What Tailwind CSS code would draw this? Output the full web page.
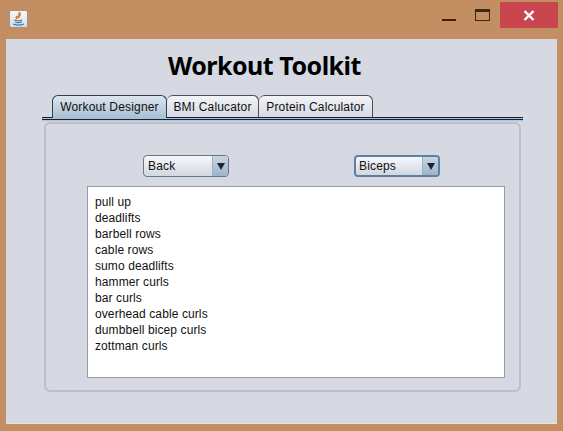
<!DOCTYPE html>
<html>
<head>
<meta charset="utf-8">
<script src="https://cdn.jsdelivr.net/npm/@tailwindcss/browser@4"></script>
</head>
<body class="m-0 overflow-hidden">
<div class="w-[563px] h-[431px] bg-[#c38f62] flex flex-col font-['Liberation_Sans',Arial,sans-serif] overflow-hidden">
  <!-- title bar -->
  <div class="h-[39px] shrink-0 flex items-start relative">
    <div class="ml-[9px] mt-[10px] w-[19px] h-[18px] rounded-[2px] bg-gradient-to-b from-[#f8f8f8] to-[#d8dde3] border border-[#9a9590] flex items-center justify-center">
      <svg width="13" height="14" viewBox="0 0 13 14">
        <path d="M7 1c1 2-2 3-1 5 1-1 3-2 2-5zM5 4c-1 1-1 2 0 3" fill="none" stroke="#d9793a" stroke-width="1.3"/>
        <path d="M2 8c2 1 7 1 8 0M3 10c2 .8 5 .8 7 0M1 12c3 1.300 8 1.300 11 0" fill="none" stroke="#3d7ca8" stroke-width="1.200"/>
      </svg>
    </div>
    <div class="ml-auto flex items-start">
      <div class="w-[14px] h-[2px] bg-[#3a2208] mt-[19px] mr-[19px]"></div>
      <div class="w-[15px] h-[12px] mt-[9px] mr-[10px] border border-[#3a2a14] border-t-[3px]"></div>
      <div class="w-[58px] h-[26px] mt-[2px] mr-[5px] bg-[#c9464f] flex items-center justify-center">
        <svg width="12" height="11" viewBox="0 0 12 11"><path d="M1.500 1 10.500 10M10.500 1 1.500 10" stroke="#fff" stroke-width="2.400"/></svg>
      </div>
    </div>
  </div>
  <!-- client -->
  <div class="ml-[6px] w-[551px] h-[385px] shrink-0 bg-[#d6d9e1] border-b border-[#e8e4dc] flex flex-col">
    <div class="mt-[9px] h-[34px] pl-[162px] text-[25px] leading-[34px] font-bold text-black font-['Noto_Sans',sans-serif] tracking-[-0.5px] whitespace-nowrap">Workout Toolkit</div>
    <!-- tabs -->
    <div class="mt-[12px] ml-[36px] w-[481px] h-[24px] flex items-end pl-[10px] border-b border-[#0f2440] text-[12px] leading-[22px] text-[#111] tracking-[0.17px]">
      <div class="h-[23px] -mb-[1px] w-[115px] text-center rounded-t-[6px] border border-b-0 border-[#2d3f55] bg-gradient-to-b from-[#dde5ed] to-[#a9bfd3] z-10">Workout Designer</div>
      <div class="h-[22px] w-[92px] text-center rounded-t-[6px] border border-l-0 border-b-0 border-[#4a4f58] bg-gradient-to-b from-[#f3f4f7] to-[#d5d9e2]">BMI Calucator</div>
      <div class="h-[22px] w-[114px] text-center rounded-t-[6px] border border-l-0 border-b-0 border-[#4a4f58] bg-gradient-to-b from-[#f3f4f7] to-[#d5d9e2]">Protein Calculator</div>
    </div>
    <div class="ml-[36px] w-[481px] h-[1px] bg-[#a9bfd3]"></div>
    <div class="ml-[36px] w-[481px] h-[1px] bg-[#0f2440]"></div>
    <div class="ml-[36px] w-[481px] h-[2px] bg-gradient-to-b from-[#b6bcc8] to-[#d6d9e1]"></div>
    <!-- panel -->
    <div class="ml-[38px] w-[477px] h-[270px] rounded-[6px] border-2 border-[#bcc0c9] bg-[#d6d9e1] flex flex-col">
      <div class="mt-[31px] h-[22px] flex text-[12px] text-[#111] tracking-[0.17px]">
        <div class="ml-[97px] w-[86px] h-[22px] rounded-[4px] border border-[#66778a] flex overflow-hidden bg-gradient-to-b from-[#f7f8fa] to-[#d2d7e0]">
          <div class="flex-1 pl-[4px] leading-[20px]">Back</div>
          <div class="w-[16px] border-l border-[#9fb0c0] bg-gradient-to-b from-[#c9d6e2] to-[#9db4c8] flex items-center justify-center">
            <svg width="8" height="7" viewBox="0 0 8 7"><path d="M0 0h8L4 7z" fill="#1a2433"/></svg>
          </div>
        </div>
        <div class="ml-[125px] w-[86px] h-[22px] rounded-[4px] border-2 border-[#5a82a8] flex overflow-hidden bg-gradient-to-b from-[#f7f8fa] to-[#d2d7e0]">
          <div class="flex-1 pl-[3px] leading-[18px]">Biceps</div>
          <div class="w-[16px] border-l border-[#9fb0c0] bg-gradient-to-b from-[#c9d6e2] to-[#9db4c8] flex items-center justify-center">
            <svg width="8" height="7" viewBox="0 0 8 7"><path d="M0 0h8L4 7z" fill="#1a2433"/></svg>
          </div>
        </div>
      </div>
      <div class="mt-[9px] ml-[41px] w-[418px] h-[192px] bg-white border border-[#9a9da3] pt-[7px] pl-[7px] text-[12px] leading-[16px] text-[#111] tracking-[0.1px]">
        <div>pull up</div>
        <div>deadlifts</div>
        <div>barbell rows</div>
        <div>cable rows</div>
        <div>sumo deadlifts</div>
        <div>hammer curls</div>
        <div>bar curls</div>
        <div>overhead cable curls</div>
        <div>dumbbell bicep curls</div>
        <div>zottman curls</div>
      </div>
    </div>
  </div>
</div>
</body>
</html>
